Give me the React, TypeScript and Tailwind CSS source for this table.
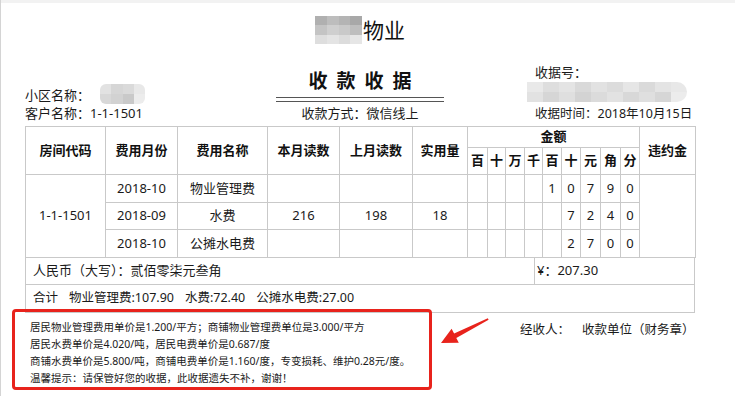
import React from "react";

const B = "border border-[#c9c9c9]";

function Mosaic({ cells, className }: { cells: string[][]; className: string }) {
  return (
    <div className={`flex flex-col overflow-hidden blur-[0.6px] ${className}`}>
      {cells.map((row, i) => (
        <div key={i} className="flex flex-1">
          {row.map((c, j) => (
            <div key={j} className="flex-1" style={{ background: c }} />
          ))}
        </div>
      ))}
    </div>
  );
}

export default function App() {
  const digitW = ["w-[20px]", "w-[18px]", "w-[19px]", "w-[18px]", "w-[19px]", "w-[19px]", "w-[20px]", "w-[20px]", "w-[19px]"];
  const digitLabels = ["百", "十", "万", "千", "百", "十", "元", "角", "分"];
  const rows = [
    { m: "2018-10", n: "物业管理费", a: "", b: "", c: "", d: ["", "", "", "", "1", "0", "7", "9", "0"] },
    { m: "2018-09", n: "水费", a: "216", b: "198", c: "18", d: ["", "", "", "", "", "7", "2", "4", "0"] },
    { m: "2018-10", n: "公摊水电费", a: "", b: "", c: "", d: ["", "", "", "", "", "2", "7", "0", "0"] },
  ];
  const th = `${B} p-0 text-center font-bold text-[13px] text-[#111]`;
  const td = `${B} p-0 text-center text-[13px] text-[#1a1a1a]`;

  return (
    <div className="relative w-[735px] h-[396px] overflow-hidden bg-white border-l border-[#d4d4d4] font-['Noto_Sans','Noto_Sans_CJK_SC',sans-serif] text-[#1a1a1a]">
      <div className="h-[3px] bg-[#f2f2f2]" />
      {/* Title */}
      <div className="h-[54px] flex items-center justify-center pr-[16px]">
        <Mosaic
          className="w-[47px] h-[28px] mr-[1px]"
          cells={[
            ["#b0b0b0", "#bdbdbd", "#b4b4b4", "#a8a8a8"],
            ["#c4c4c4", "#cfcfcf", "#c9c9c9", "#bebebe"],
            ["#dedede", "#e4e4e4", "#dcdcdc", "#e6e6e6"],
          ]}
        />
        <span className="text-[21px] leading-none text-[#111]">物业</span>
      </div>
      {/* Header info */}
      <div className="flex h-[69px] pl-[24px]">
        <div className="w-[251px] pt-[30px] text-[13px]">
          <div className="h-[18px] flex items-center">
            <span>小区名称：</span>
            <Mosaic
              className="ml-[10px] w-[45px] h-[20px] rounded-[6px] -mt-[4px]"
              cells={[
                ["#e2e2e2", "#d6d6d6", "#dadada", "#e8e8e8"],
                ["#d8d8d8", "#d2d2d2", "#c9c9c9", "#ececec"],
              ]}
            />
          </div>
          <div className="h-[18px] flex items-center">客户名称：1-1-1501</div>
        </div>
        <div className="w-[168px] pt-[14px] flex flex-col">
          <div className="h-[20px] flex items-center justify-center text-[19px] font-bold text-[#111] tracking-[9px] pl-[9px] leading-none">
            收款收据
          </div>
          <div className="mt-[6px] h-[5px] border-t border-b border-[#555]" />
          <div className="mt-[3px] h-[18px] flex items-center justify-center text-[13px]">收款方式：微信线上</div>
        </div>
        <div className="flex-1 pt-[7px] text-[13px] pl-[83px]">
          <div className="h-[18px] flex items-center pl-[8px]">收据号：</div>
          <Mosaic
            className="w-[160px] h-[20px] rounded-r-[10px]"
            cells={[
              ["#e9e9e9", "#dedede", "#e4e4e4", "#d9d9d9", "#e2e2e2", "#dcdcdc", "#e6e6e6", "#dadada", "#e4e4e4", "#e8e8e8"],
              ["#e2e2e2", "#d6d6d6", "#dfdfdf", "#d3d3d3", "#dbdbdb", "#e2e2e2", "#d8d8d8", "#dfdfdf", "#d6d6d6", "#ececec"],
            ]}
          />
          <div className="mt-[3px] h-[18px] flex items-center pl-[8px] text-[12.5px]">收据时间：2018年10月15日</div>
        </div>
      </div>
      {/* Table */}
      <div className="pl-[24px]">
        <table className="table-fixed border-collapse w-[670px]">
          <colgroup>
            <col className="w-[80px]" />
            <col className="w-[72px]" />
            <col className="w-[90px]" />
            <col className="w-[72px]" />
            <col className="w-[73px]" />
            <col className="w-[55px]" />
            {digitW.map((w, i) => (
              <col key={i} className={w} />
            ))}
            <col className="w-[56px]" />
          </colgroup>
          <tbody>
            <tr className="h-[21px]">
              <th rowSpan={2} className={th}>房间代码</th>
              <th rowSpan={2} className={th}>费用月份</th>
              <th rowSpan={2} className={th}>费用名称</th>
              <th rowSpan={2} className={th}>本月读数</th>
              <th rowSpan={2} className={th}>上月读数</th>
              <th rowSpan={2} className={th}>实用量</th>
              <th colSpan={9} className={th}>金额</th>
              <th rowSpan={2} className={th}>违约金</th>
            </tr>
            <tr className="h-[27px]">
              {digitLabels.map((l, i) => (
                <th key={i} className={th}>{l}</th>
              ))}
            </tr>
            {rows.map((r, ri) => (
              <tr key={ri} className={ri === 1 ? "h-[27px]" : "h-[28px]"}>
                {ri === 0 && (
                  <td rowSpan={3} className={td}>1-1-1501</td>
                )}
                <td className={td}>{r.m}</td>
                <td className={td}>{r.n}</td>
                <td className={td}>{r.a}</td>
                <td className={td}>{r.b}</td>
                <td className={td}>{r.c}</td>
                {r.d.map((d, di) => (
                  <td key={di} className={td}>{d}</td>
                ))}
                {ri === 0 && <td rowSpan={3} className={td} />}
              </tr>
            ))}
          </tbody>
        </table>
        <div className="flex w-[670px] h-[27px] border-x border-b border-[#c9c9c9] text-[13px]">
          <div className="w-[509px] border-r border-[#c9c9c9] pl-[7px] flex items-center">人民币（大写）：贰佰零柒元叁角</div>
          <div className="pl-[2px] flex items-center">¥：207.30</div>
        </div>
        <div className="flex items-center w-[670px] h-[28px] border-x border-b border-[#c9c9c9] text-[12.5px] pl-[7px]">
          <span>合计</span>
          <span className="ml-[11px]">物业管理费:107.90</span>
          <span className="ml-[11px]">水费:72.40</span>
          <span className="ml-[11px]">公摊水电费:27.00</span>
        </div>
      </div>
      {/* Footer */}
      <div className="flex pl-[29px] pt-[6px]">
        <div className="w-[490px] text-[10.5px] leading-[17px] text-[#1a1a1a]">
          <div>居民物业管理费用单价是1.200/平方；商铺物业管理费单位是3.000/平方</div>
          <div>居民水费单价是4.020/吨，居民电费单价是0.687/度</div>
          <div>商铺水费单价是5.800/吨，商铺电费单价是1.160/度，专变损耗、维护0.28元/度。</div>
          <div>温馨提示：请保管好您的收据，此收据遗失不补，谢谢！</div>
        </div>
        <div className="flex text-[12.5px] leading-[18px] pt-[2px]">
          <span>经收人：</span>
          <span className="ml-[12px]">收款单位（财务章）</span>
        </div>
      </div>
      {/* annotation */}
      <div className="absolute left-[11px] top-[309px] w-[420px] h-[81px] border-[3px] border-[#e8231c] rounded-[4px]" />
      <svg className="absolute left-0 top-0" width="735" height="396" viewBox="0 0 735 396">
        <polygon
          points="440,343 450.6,328.7 453.1,333.5 486.8,318.2 487.6,319.8 455.3,338 457.8,342.8"
          fill="#e8231c"
        />
      </svg>
    </div>
  );
}
